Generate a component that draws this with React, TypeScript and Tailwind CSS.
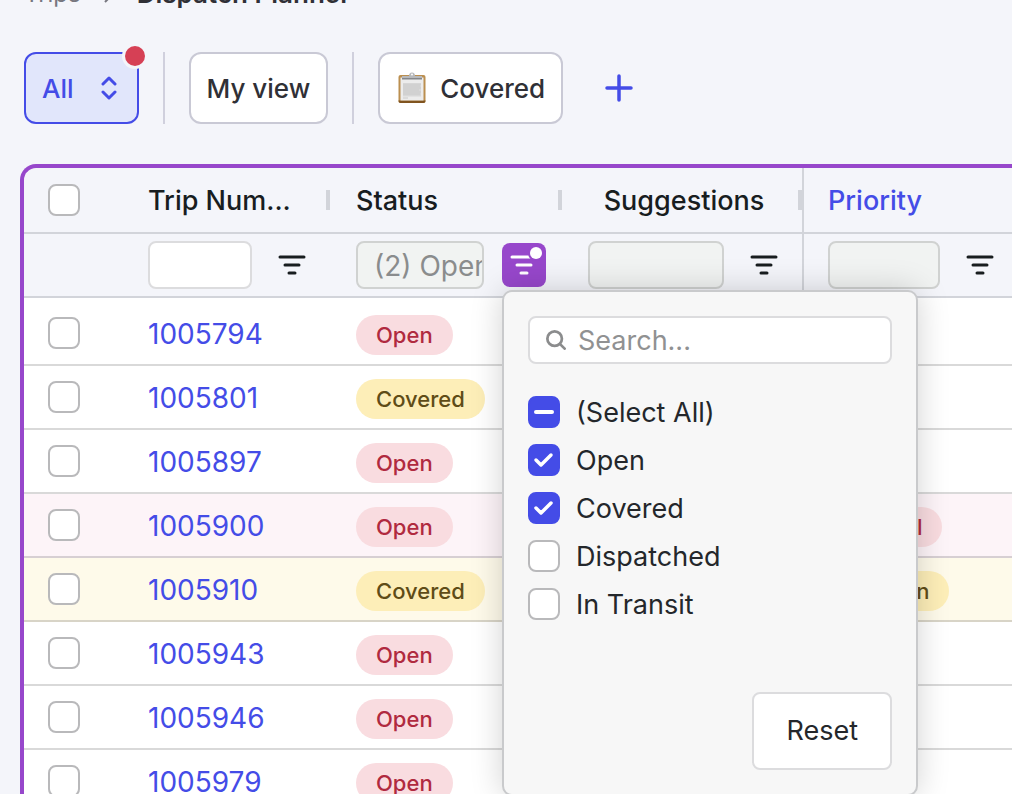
import { useEffect, useRef } from 'react';

type Level = 'danger' | 'warning';

interface Trip {
    id: string;
    status: 'Open' | 'Covered';
    priority?: { label: string; level: Level };
}

const trips: Trip[] = [
    { id: '1005794', status: 'Open' },
    { id: '1005801', status: 'Covered' },
    { id: '1005897', status: 'Open' },
    { id: '1005900', status: 'Open', priority: { label: 'Critical', level: 'danger' } },
    { id: '1005910', status: 'Covered', priority: { label: 'Caution', level: 'warning' } },
    { id: '1005943', status: 'Open' },
    { id: '1005946', status: 'Open' },
    { id: '1005979', status: 'Open' },
];

const statusOptions = [
    { label: 'Open', checked: true },
    { label: 'Covered', checked: true },
    { label: 'Dispatched', checked: false },
    { label: 'In Transit', checked: false },
];

const pillStyles: Record<Level, string> = {
    danger: 'bg-[#f9dce0] text-[#b02a3f]',
    warning: 'bg-[#fdeeb8] text-[#5f4c17]',
};

const rowStyles: Record<Level, string> = {
    danger: 'bg-[#fdf4f8]',
    warning: 'bg-[#fefaea]',
};

interface CheckboxProps {
    label: string;
    checked?: boolean;
    indeterminate?: boolean;
    showLabel?: boolean;
}

function Checkbox({ label, checked = false, indeterminate = false, showLabel = false }: CheckboxProps) {
    const ref = useRef<HTMLInputElement>(null);

    useEffect(() => {
        if (ref.current) ref.current.indeterminate = indeterminate;
    }, [indeterminate]);

    return (
        <label className="flex items-center gap-4">
            <span className="grid size-8 shrink-0">
                <input
                    ref={ref}
                    type="checkbox"
                    aria-label={showLabel ? undefined : label}
                    defaultChecked={checked}
                    className="peer col-start-1 row-start-1 size-8 appearance-none rounded-[8px] border-2 border-[#b9b9bb] bg-white checked:border-[#444ce7] checked:bg-[#444ce7] indeterminate:border-[#444ce7] indeterminate:bg-[#444ce7]"
                />
                <svg
                    viewBox="0 0 32 32"
                    fill="none"
                    stroke="white"
                    className="pointer-events-none invisible col-start-1 row-start-1 size-8 peer-checked:visible peer-indeterminate:visible"
                >
                    {indeterminate ? (
                        <path d="M8 16h16" strokeWidth="4" strokeLinecap="round" />
                    ) : (
                        <path d="M8 16l5 5L23 11" strokeWidth="3.500" strokeLinecap="round" strokeLinejoin="round" />
                    )}
                </svg>
            </span>
            {showLabel && <span className="pt-0.5 text-[27px] leading-8 text-[#24272b]">{label}</span>}
        </label>
    );
}

function Pill({ level, children }: { level: Level; children: string }) {
    return (
        <span className={`inline-flex h-10 items-center rounded-full px-5 text-[22px] font-medium ${pillStyles[level]}`}>
            {children}
        </span>
    );
}

function FilterIcon() {
    return (
        <svg viewBox="0 0 28 22" fill="none" stroke="currentColor" strokeWidth="3" strokeLinecap="round" className="h-[22px] w-7">
            <path d="M2 3h24M7 11h14M11 19h6" />
        </svg>
    );
}

function ClipboardIcon() {
    return (
        <svg viewBox="-2 0 32 32" className="size-8">
            <rect x="0.5" y="3" width="27" height="28" rx="2" fill="#bb8f50" />
            <path d="M0.5 28.500h27v0.5a2 2 0 0 1-2 2h-23a2 2 0 0 1-2-2z" fill="#80541f" />
            <rect x="2.500" y="5.500" width="23" height="23" fill="#ececec" />
            <path d="M5 11.500h18v13H5z" fill="#d8d8d8" />
            <path d="M5 12h18M5 14h17M5 16h18M5 18h16M5 20h18M5 22h17M5 26h5" stroke="#cacaca" strokeWidth="1" />
            <path d="M4 4h7c0-2 1-3.500 3-3.500s3 1.500 3 3.500h7v3H4z" fill="#b7b9bc" />
            <path d="M4 6h20v1.500H4z" fill="#85878a" />
            <circle cx="14" cy="2.500" r="1" fill="#fff" />
        </svg>
    );
}

function HeaderCell({ title, className = 'pr-0.5 pl-6', last = false }: { title: string; className?: string; last?: boolean }) {
    return (
        <th className={`h-[66px] border-b-2 border-[#d2d4da] py-0 ${className}`}>
            <div className="flex items-center">
                <span className="flex-1 pt-0.5 text-[27px] leading-8 font-medium">{title}</span>
                {!last && <span className="h-5 w-1 bg-[#d2d4da]" />}
            </div>
        </th>
    );
}

interface FilterCellProps {
    label: string;
    value?: string;
    disabled?: boolean;
    active?: boolean;
    divider?: boolean;
}

function FilterCell({ label, value = '', disabled = false, active = false, divider = false }: FilterCellProps) {
    return (
        <td className={`h-16 border-b-2 border-[#d2d4da] p-0 ${divider ? 'border-r-2' : ''}`}>
            <div className={`relative flex items-center gap-[18px] pl-6 ${divider ? 'pr-4' : 'pr-[18px]'}`}>
                <input
                    type="text"
                    aria-label={`${label} filter`}
                    defaultValue={value}
                    disabled={disabled}
                    className="h-12 min-w-0 flex-1 rounded-[8px] border-2 border-[#dcdcde] bg-white pt-0.5 pl-4 text-[28px] text-[#8a8c8d] disabled:border-[#d0d2d1] disabled:bg-[#f1f3f2]"
                />
                <button
                    type="button"
                    aria-label={`Open ${label} filter menu`}
                    className={`relative flex size-11 shrink-0 items-center justify-center rounded-[8px] ${active ? 'bg-[#9747cb] text-white' : 'text-[#181d1f]'}`}
                >
                    <FilterIcon />
                    {active && <span className="absolute top-1 right-1 size-3 rounded-full bg-white ring-2 ring-[#9747cb]" />}
                </button>
                {active && <FilterMenu />}
            </div>
        </td>
    );
}

function FilterMenu() {
    return (
        <div className="absolute top-[49px] left-[170px] z-10 w-[416px] rounded-[10px] border-2 border-[#c9cacc] bg-[#f7f7f7] p-6 shadow-[0_0_32px_rgba(0,0,0,0.18)]">
            <div className="flex h-12 items-center gap-3 rounded-[8px] border-2 border-[#dcdcde] bg-white pl-4 text-[#8b8c8d]">
                <svg viewBox="0 0 22 22" fill="none" stroke="currentColor" strokeWidth="3" strokeLinecap="round" className="size-5 shrink-0">
                    <circle cx="9.500" cy="9.500" r="8" />
                    <path d="M15.500 15.500l5 5" />
                </svg>
                <input
                    type="text"
                    aria-label="Search statuses"
                    placeholder="Search..."
                    className="min-w-0 flex-1 bg-transparent pt-0.5 text-[27px] placeholder:text-[#909192]"
                />
            </div>
            <ul className="mt-6">
                <li className="flex h-12 items-center">
                    <Checkbox label="(Select All)" indeterminate showLabel />
                </li>
                {statusOptions.map((option) => (
                    <li key={option.label} className="flex h-12 items-center">
                        <Checkbox label={option.label} checked={option.checked} showLabel />
                    </li>
                ))}
            </ul>
            <div className="mt-16 flex justify-end">
                <button type="button" className="h-[78px] rounded-[8px] border-2 border-[#dcdcde] bg-white px-8 text-[27px] text-[#24272b]">
                    Reset
                </button>
            </div>
        </div>
    );
}

function TripRow({ trip }: { trip: Trip }) {
    const background = trip.priority ? rowStyles[trip.priority.level] : 'bg-white';

    return (
        <tr className={`h-16 *:border-b-2 *:border-black/15 *:p-0 *:pl-6 first:h-[68px] first:*:pt-1 ${background}`}>
            <td>
                <Checkbox label={`Select trip ${trip.id}`} />
            </td>
            <td>
                <a href={`#trip-${trip.id}`} className="block pt-0.5 text-[28px] leading-8 text-[#444ce7]">
                    {trip.id}
                </a>
            </td>
            <td>
                <div className="flex pt-1">
                    <Pill level={trip.status === 'Open' ? 'danger' : 'warning'}>{trip.status}</Pill>
                </div>
            </td>
            <td />
            <td>
                {trip.priority && (
                    <div className="flex pt-1">
                        <Pill level={trip.priority.level}>{trip.priority.label}</Pill>
                    </div>
                )}
            </td>
        </tr>
    );
}

function ViewBar() {
    return (
        <div className="flex h-[72px] items-stretch gap-6 px-6 text-[26px] font-medium">
            <button type="button" className="relative flex items-center gap-[23px] rounded-[12px] border-2 border-[#444ce7] bg-[#e1e6fb] px-4 text-[#444ce7]">
                All
                <svg viewBox="0 0 24 24" fill="none" stroke="currentColor" strokeWidth="3" strokeLinecap="round" strokeLinejoin="round" className="size-6">
                    <path d="M6 8l6-6 6 6M6 16l6 6 6-6" />
                </svg>
                <span className="absolute -top-2 -right-2 size-5 rounded-full bg-[#d64055] ring-[3px] ring-[#f4f5fa]" />
            </button>
            <span className="w-0.5 bg-[#d0d0dd]" />
            <button type="button" className="rounded-[12px] border-2 border-[#c9c9d5] bg-white px-4 text-[#303036]">
                My view
            </button>
            <span className="w-0.5 bg-[#d0d0dd]" />
            <button type="button" className="flex items-center gap-3 rounded-[12px] border-2 border-[#c9c9d5] bg-white px-4 text-[#303036]">
                <ClipboardIcon />
                Covered
            </button>
            <button type="button" aria-label="Add view" className="flex w-16 items-center justify-center text-[#444ce7]">
                <svg viewBox="0 0 28 28" fill="none" stroke="currentColor" strokeWidth="3.500" strokeLinecap="round" className="size-7">
                    <path d="M14 2v24M2 14h24" />
                </svg>
            </button>
        </div>
    );
}

export default function App() {
    return (
        <div className="flex h-screen flex-col overflow-hidden bg-[#f4f5fa] font-['Inter',sans-serif]">
            {/* Breadcrumbs are scrolled almost out of view */}
            <nav aria-label="Breadcrumb" className="-mt-6 flex h-9 shrink-0 items-center gap-[22px] px-6 text-[26px] leading-8">
                <a href="#trips" className="text-2xl leading-8 text-[#77777f]">
                    Trips
                </a>
                <svg viewBox="0 0 12 20" fill="none" stroke="#77777f" strokeWidth="2" className="h-5 w-3">
                    <path d="M2 2l8 8-8 8" />
                </svg>
                <span className="font-semibold text-[#303036]">Dispatch Planner</span>
            </nav>
            <div className="mt-10 shrink-0">
                <ViewBar />
            </div>
            <main className="mt-10 ml-5 min-h-0 flex-1 overflow-hidden rounded-tl-[16px] border-t-4 border-l-4 border-[#9747cb]">
                <table className="w-full min-w-[996px] table-fixed border-separate border-spacing-0 text-left">
                    <colgroup>
                        <col className="w-[100px]" />
                        <col className="w-[208px]" />
                        <col className="w-[232px]" />
                        <col className="w-[240px]" />
                        <col />
                    </colgroup>
                    <thead className="text-[#181d1f]">
                        <tr>
                            <th className="border-b-2 border-[#d2d4da] p-0 pl-6">
                                <Checkbox label="Select all trips" />
                            </th>
                            <HeaderCell title="Trip Num..." />
                            <HeaderCell title="Status" />
                            <HeaderCell title="Suggestions" className="border-r-2 pr-0 pl-1.5 text-center" />
                            <HeaderCell title="Priority" className="pr-0.5 pl-6 text-[#444ce7]" last />
                        </tr>
                        <tr>
                            <td className="border-b-2 border-[#d2d4da]" />
                            <FilterCell label="Trip Number" />
                            <FilterCell label="Status" value="(2) Open,Covered" disabled active />
                            <FilterCell label="Suggestions" disabled divider />
                            <FilterCell label="Priority" disabled />
                        </tr>
                    </thead>
                    <tbody>
                        {trips.map((trip) => (
                            <TripRow key={trip.id} trip={trip} />
                        ))}
                    </tbody>
                </table>
            </main>
        </div>
    );
}
